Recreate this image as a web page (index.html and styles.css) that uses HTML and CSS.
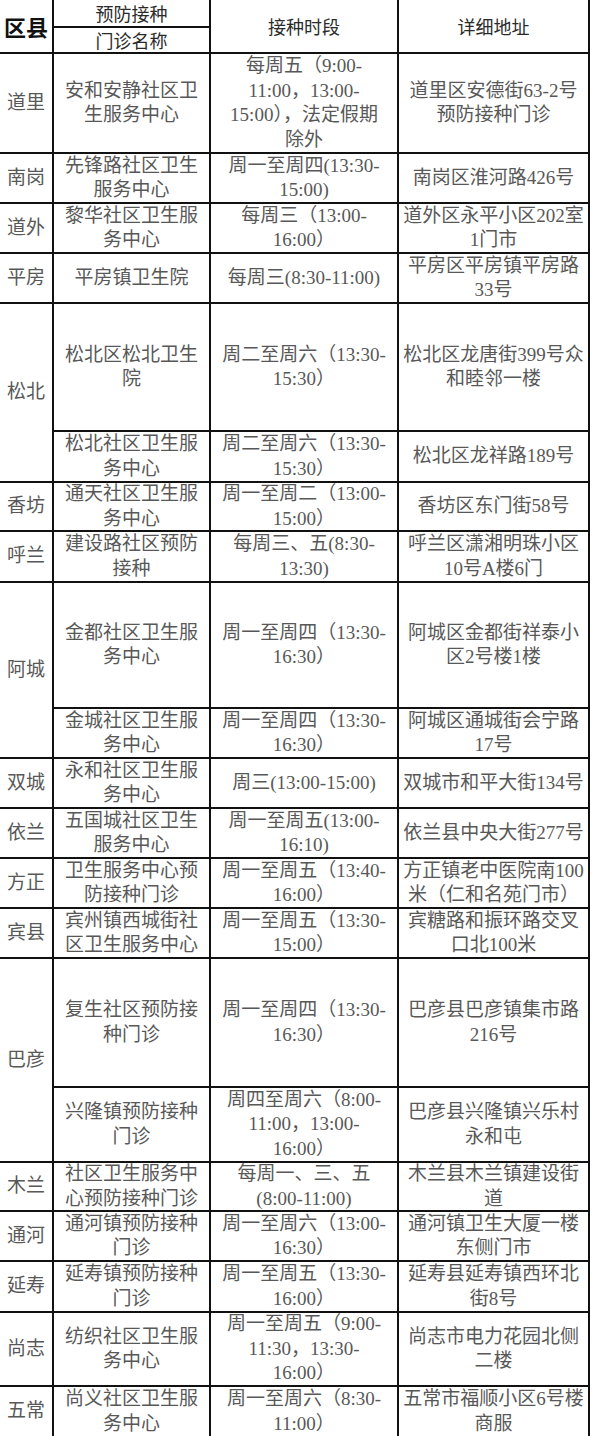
FILE: index.html
```html
<!DOCTYPE html>
<html lang="zh-CN">
<head>
<meta charset="utf-8">
<title>预防接种门诊</title>
<link rel="stylesheet" href="styles.css">
</head>
<body>
<div class="sched">
  <div class="cell hd hd-dist span2">区县</div>
  <div class="cell hd">预防接种</div>
  <div class="cell hd span2">接种时段</div>
  <div class="cell hd span2">详细地址</div>
  <div class="cell hd">门诊名称</div>

  <div class="cell">道里</div><div class="cell">安和安静社区卫<br>生服务中心</div><div class="cell">每周五（9:00-<br>11:00，13:00-<br>15:00），法定假期<br>除外</div><div class="cell">道里区安德街63-2号<br>预防接种门诊</div>
  <div class="cell">南岗</div><div class="cell">先锋路社区卫生<br>服务中心</div><div class="cell">周一至周四(13:30-<br>15:00)</div><div class="cell">南岗区淮河路426号</div>
  <div class="cell">道外</div><div class="cell">黎华社区卫生服<br>务中心</div><div class="cell">每周三（13:00-<br>16:00）</div><div class="cell">道外区永平小区202室<br>1门市</div>
  <div class="cell">平房</div><div class="cell">平房镇卫生院</div><div class="cell">每周三(8:30-11:00)</div><div class="cell">平房区平房镇平房路<br>33号</div>
  <div class="cell span2">松北</div><div class="cell">松北区松北卫生<br>院</div><div class="cell">周二至周六（13:30-<br>15:30）</div><div class="cell">松北区龙唐街399号众<br>和睦邻一楼</div>
  <div class="cell">松北社区卫生服<br>务中心</div><div class="cell">周二至周六（13:30-<br>15:30）</div><div class="cell">松北区龙祥路189号</div>
  <div class="cell">香坊</div><div class="cell">通天社区卫生服<br>务中心</div><div class="cell">周一至周二（13:00-<br>15:00）</div><div class="cell">香坊区东门街58号</div>
  <div class="cell">呼兰</div><div class="cell">建设路社区预防<br>接种</div><div class="cell">每周三、五(8:30-<br>13:30)</div><div class="cell">呼兰区潇湘明珠小区<br>10号A楼6门</div>
  <div class="cell span2">阿城</div><div class="cell">金都社区卫生服<br>务中心</div><div class="cell">周一至周四（13:30-<br>16:30）</div><div class="cell">阿城区金都街祥泰小<br>区2号楼1楼</div>
  <div class="cell">金城社区卫生服<br>务中心</div><div class="cell">周一至周四（13:30-<br>16:30）</div><div class="cell">阿城区通城街会宁路<br>17号</div>
  <div class="cell">双城</div><div class="cell">永和社区卫生服<br>务中心</div><div class="cell">周三(13:00-15:00)</div><div class="cell">双城市和平大街134号</div>
  <div class="cell">依兰</div><div class="cell">五国城社区卫生<br>服务中心</div><div class="cell">周一至周五(13:00-<br>16:10)</div><div class="cell">依兰县中央大街277号</div>
  <div class="cell">方正</div><div class="cell">卫生服务中心预<br>防接种门诊</div><div class="cell">周一至周五（13:40-<br>16:00）</div><div class="cell">方正镇老中医院南100<br>米（仁和名苑门市）</div>
  <div class="cell">宾县</div><div class="cell">宾州镇西城街社<br>区卫生服务中心</div><div class="cell">周一至周五（13:30-<br>15:00）</div><div class="cell">宾糖路和振环路交叉<br>口北100米</div>
  <div class="cell span2">巴彦</div><div class="cell">复生社区预防接<br>种门诊</div><div class="cell">周一至周四（13:30-<br>16:30）</div><div class="cell">巴彦县巴彦镇集市路<br>216号</div>
  <div class="cell">兴隆镇预防接种<br>门诊</div><div class="cell">周四至周六（8:00-<br>11:00，13:00-<br>16:00）</div><div class="cell">巴彦县兴隆镇兴乐村<br>永和屯</div>
  <div class="cell">木兰</div><div class="cell">社区卫生服务中<br>心预防接种门诊</div><div class="cell">每周一、三、五<br>(8:00-11:00)</div><div class="cell">木兰县木兰镇建设街<br>道</div>
  <div class="cell">通河</div><div class="cell">通河镇预防接种<br>门诊</div><div class="cell">周一至周六（13:00-<br>16:30）</div><div class="cell">通河镇卫生大厦一楼<br>东侧门市</div>
  <div class="cell">延寿</div><div class="cell">延寿镇预防接种<br>门诊</div><div class="cell">周一至周五（13:30-<br>16:00）</div><div class="cell">延寿县延寿镇西环北<br>街8号</div>
  <div class="cell">尚志</div><div class="cell">纺织社区卫生服<br>务中心</div><div class="cell">周一至周五（9:00-<br>11:30，13:30-<br>16:00）</div><div class="cell">尚志市电力花园北侧<br>二楼</div>
  <div class="cell">五常</div><div class="cell">尚义社区卫生服<br>务中心</div><div class="cell">周一至周六（8:30-<br>11:00）</div><div class="cell">五常市福顺小区6号楼<br>商服</div>
</div>
</body>
</html>
```

FILE: styles.css
```css
html, body {
  margin: 0;
  padding: 0;
  background: #ffffff;
}

.sched {
  display: grid;
  width: 588px;
  border-right: 2px solid #111111;
  background: #111111;
  gap: 2px;
  grid-template-columns: 52px 155px 186px 189px;
  grid-template-rows:
    26px 24px
    98px 48px 48px 48px
    126px 49px 47px 49px
    124px 48px 48px 48px 48px 48px
    127px 73px 47px 48px 49px 72px 49px;
  font-family: "Liberation Serif", "Noto Sans CJK SC", sans-serif;
  font-size: 19px;
  line-height: 24.5px;
  color: #585858;
}

.cell {
  background: #ffffff;
  display: flex;
  align-items: center;
  justify-content: center;
  text-align: center;
  white-space: nowrap;
  overflow: visible;
}

.span2 {
  grid-row: span 2;
}

.hd {
  font-family: "Noto Sans CJK SC", sans-serif;
  font-size: 18px;
  line-height: 22px;
  color: #2a2a2a;
}

.hd-dist {
  font-size: 22px;
  font-weight: bold;
  color: #111111;
}
```
